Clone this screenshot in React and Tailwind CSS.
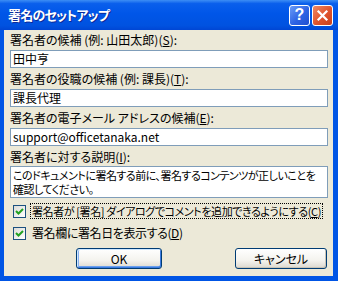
export default function App() {
  return (
    <div className="w-[338px] h-[281px] flex flex-col overflow-hidden bg-[#0055e5] font-['Noto_Sans_CJK_JP','Noto_Sans',sans-serif] text-[12px] leading-[14px] text-black [font-feature-settings:'palt']">
      {/* Title bar */}
      <div className="h-[30px] shrink-0 flex items-center pl-[8px] pr-[5px] bg-[linear-gradient(#3d8ef5_0%,#0a5fec_12%,#0056e8_45%,#0052e0_85%,#0046d4_100%)]">
        <span className="flex-1 text-white font-bold text-[13px] tracking-[-0.8px] [text-shadow:1px_1px_0_#0b2a99]">署名のセットアップ</span>
        <div className="w-[21px] h-[21px] rounded-[3px] border border-white flex items-center justify-center bg-[linear-gradient(135deg,#6a9cf7,#2d63e4_55%,#1f4fd0)] text-white font-bold text-[16px] leading-none font-['Liberation_Sans',sans-serif]">
          ?
        </div>
        <div className="ml-[2px] w-[21px] h-[21px] rounded-[3px] border border-white flex items-center justify-center bg-[linear-gradient(135deg,#ee8a66,#e0532c_55%,#c8401c)]">
          <svg width="13" height="13" viewBox="0 0 13 13">
            <path d="M2.5 2.5 L10.5 10.5 M10.5 2.5 L2.5 10.5" stroke="white" strokeWidth="2.2" strokeLinecap="square" />
          </svg>
        </div>
      </div>

      {/* Client area */}
      <div className="flex-1 ml-[4px] mr-[5px] mb-[5px] bg-[#ece9d8] pt-[3px] pl-[6px] pr-[5px] flex flex-col">
        <Label text="署名者の候補 (例: 山田太郎)" keyChar="S" />
        <Field value="田中亨" />
        <Label text="署名者の役職の候補 (例: 課長)" keyChar="T" />
        <Field value="課長代理" />
        <Label text="署名者の電子メール アドレスの候補" keyChar="E" />
        <Field value="support@officetanaka.net" />
        <Label text="署名者に対する説明" keyChar="I" />
        <div className="mt-[2px] h-[32px] border border-[#7f9db9] bg-white pl-[2px] pt-[1px] text-[11px] tracking-[-0.5px] leading-[14px] whitespace-nowrap overflow-hidden">
          このドキュメントに署名する前に、署名するコンテンツが正しいことを
          <br />
          確認してください。
        </div>

        <div className="mt-[5px] flex items-center h-[16px]">
          <Check />
          <span className="ml-[4px] px-[1px] border border-dotted border-black text-[11px] tracking-[-0.4px] leading-[14px] whitespace-nowrap">
            署名者が [署名] ダイアログでコメントを追加できるようにする(<u>C</u>)
          </span>
        </div>
        <div className="mt-[6px] flex items-center h-[16px]">
          <Check />
          <span className="ml-[6px] tracking-[-0.4px] whitespace-nowrap">
            署名欄に署名日を表示する(<u>D</u>)
          </span>
        </div>

        <div className="mt-[7px] flex justify-end gap-[73px] pr-[1px]">
          <button className="w-[86px] h-[21px] rounded-[3px] border border-[#003c74] bg-[linear-gradient(#ffffff,#f4f3ee_60%,#dcd8cf)] shadow-[inset_1px_1px_0_#cee7ff,inset_-1px_-1px_0_#3d7be0,inset_2px_0_0_#89b0f0,inset_0_-2px_0_#69a0ee] text-[12px] leading-none">
            OK
          </button>
          <button className="w-[92px] h-[21px] rounded-[3px] border border-[#003c74] bg-[linear-gradient(#ffffff,#f4f3ee_60%,#dcd8cf)] shadow-[inset_-1px_-1px_0_#c9c4b6] text-[12px] leading-none">
            キャンセル
          </button>
        </div>
      </div>
    </div>
  );
}

function Label({ text, keyChar }) {
  return (
    <div className="h-[14px] whitespace-nowrap mt-[1px] first:mt-0">
      {text}(<u>{keyChar}</u>):
    </div>
  );
}

function Field({ value }) {
  return (
    <div className="mt-[3px] mb-[3px] h-[18px] border border-[#7f9db9] bg-white pl-[2px] flex items-center whitespace-nowrap">
      {value}
    </div>
  );
}

function Check() {
  return (
    <div className="ml-[3px] w-[13px] h-[13px] border border-[#1c5180] bg-[linear-gradient(135deg,#dcdcd7,#ffffff)] flex items-center justify-center shrink-0">
      <svg width="9" height="9" viewBox="0 0 9 9">
        <path d="M1 4 L3.5 6.5 L8 2" fill="none" stroke="#21a121" strokeWidth="2" />
      </svg>
    </div>
  );
}
